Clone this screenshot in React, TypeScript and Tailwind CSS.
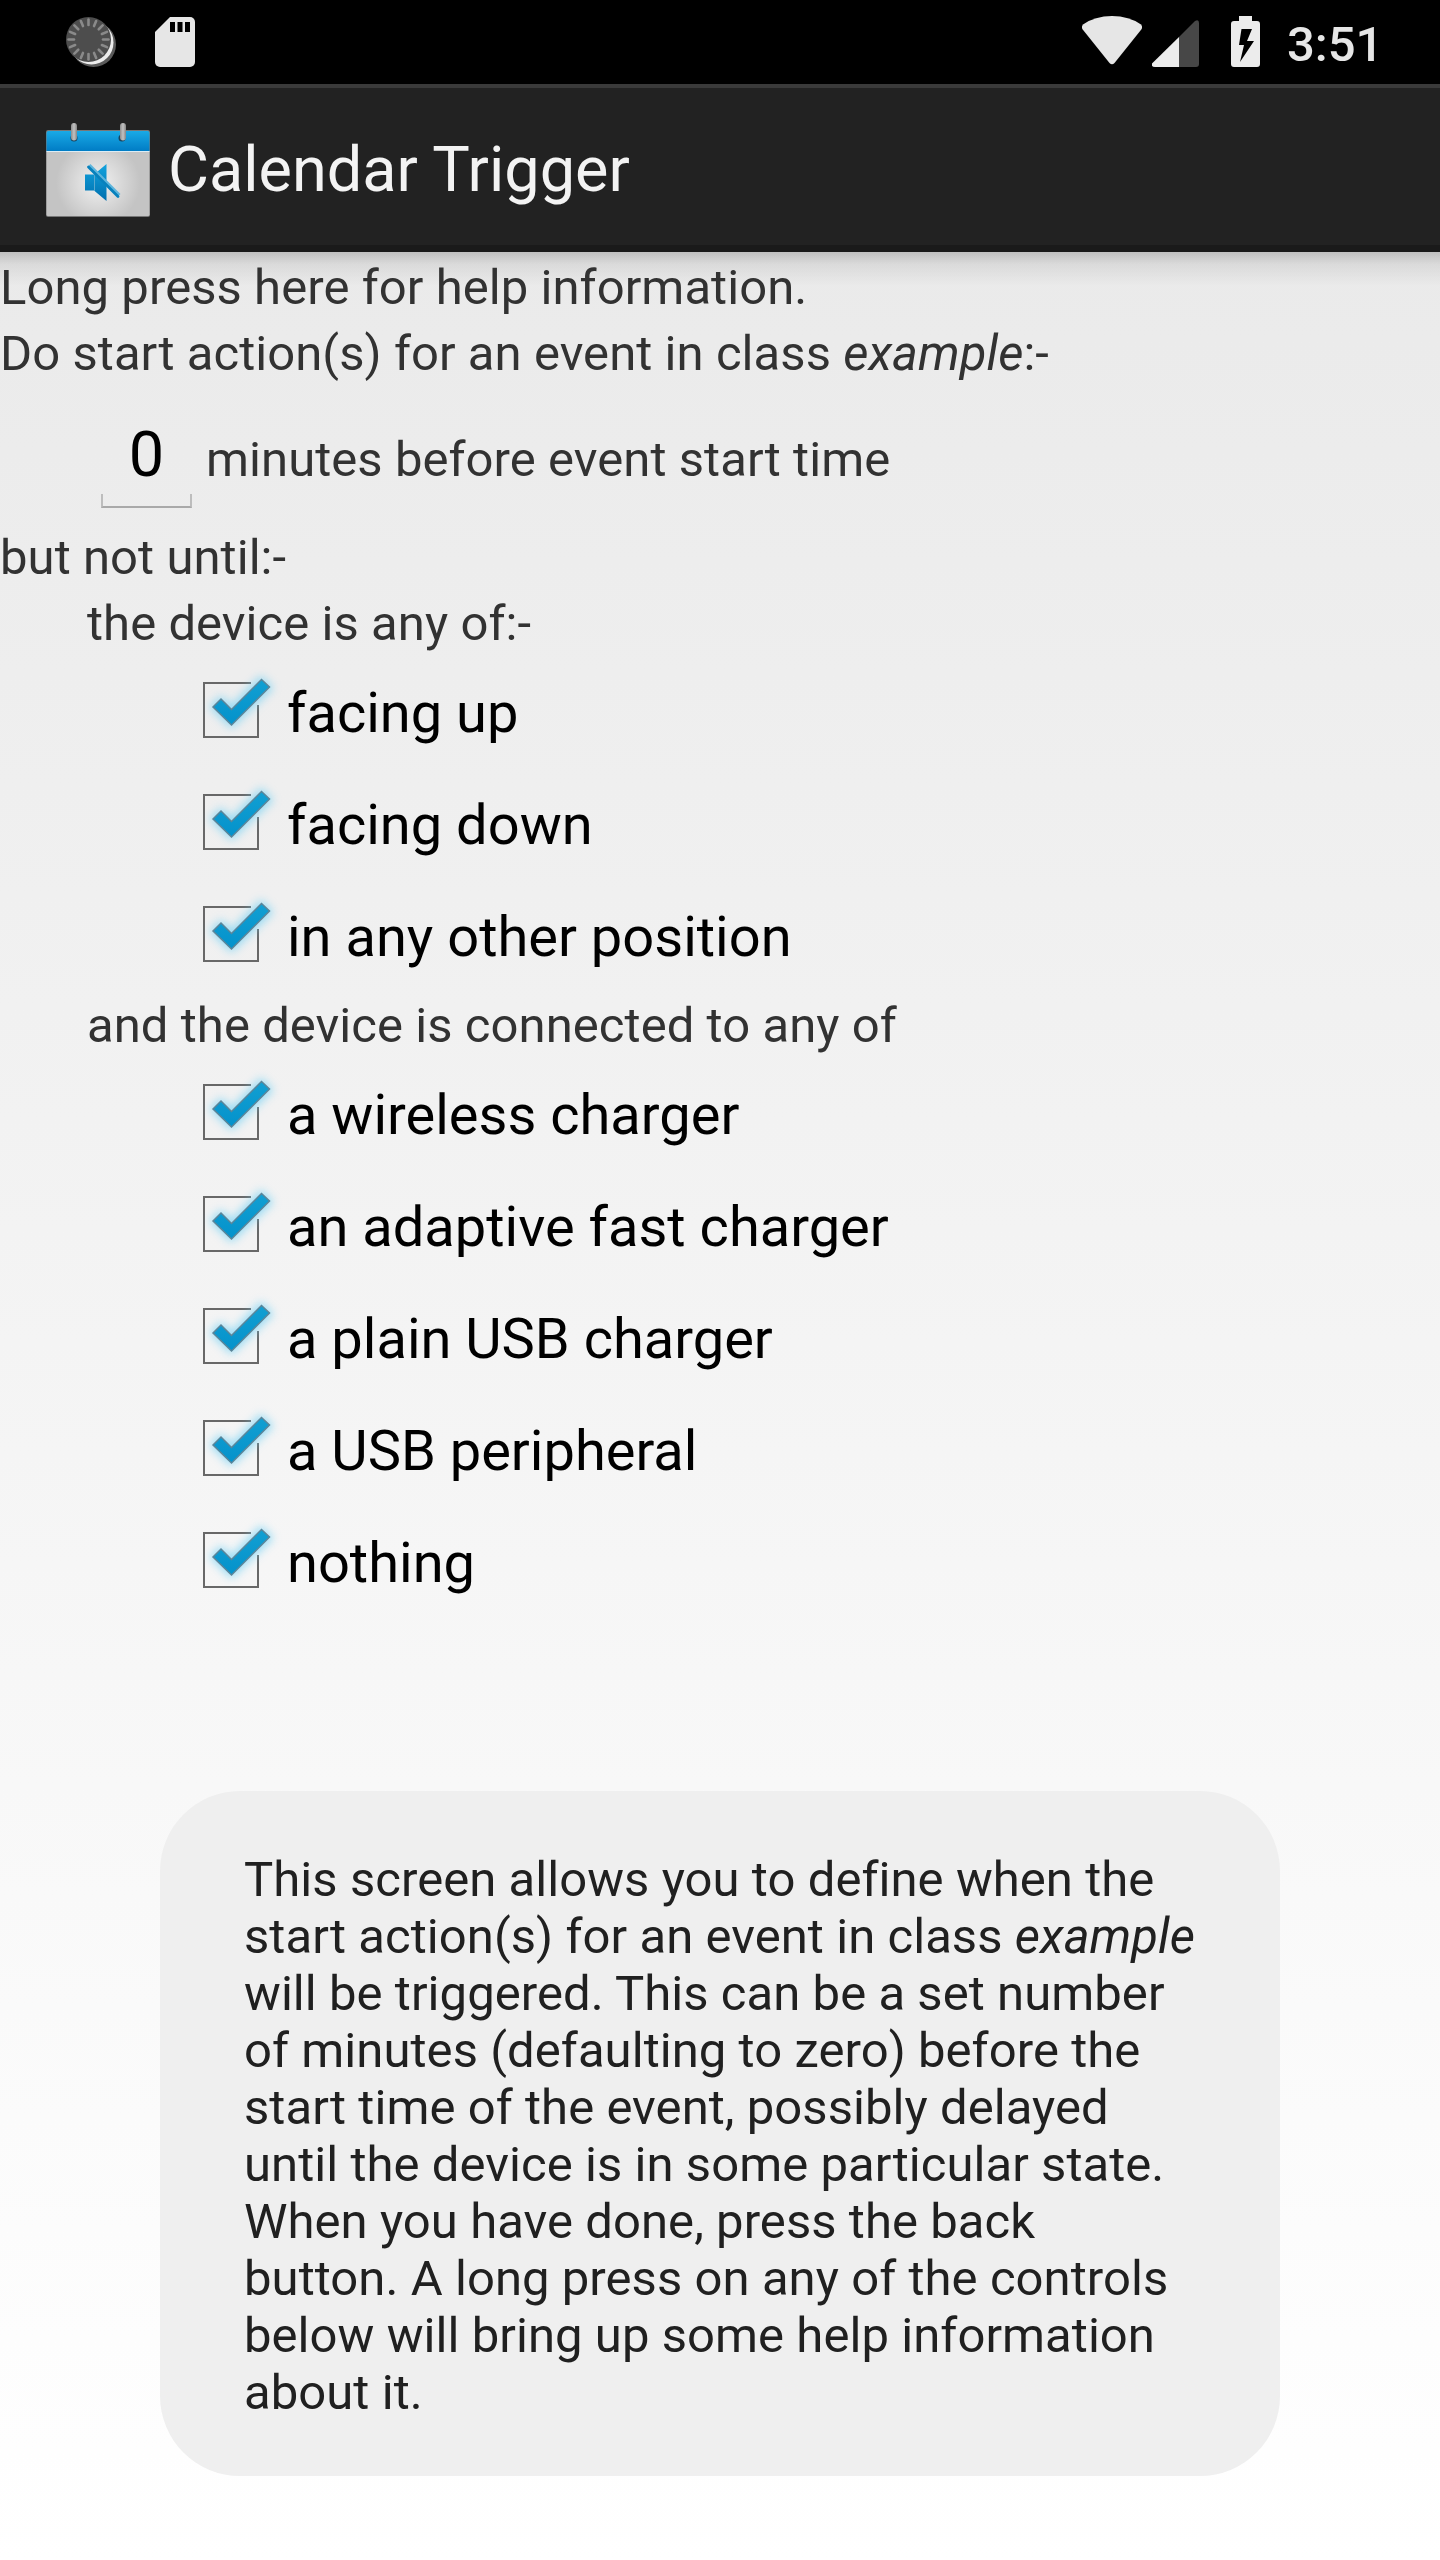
import React from "react";

const deviceStates = ["facing up", "facing down", "in any other position"];
const connections = [
  "a wireless charger",
  "an adaptive fast charger",
  "a plain USB charger",
  "a USB peripheral",
  "nothing",
];

function SyncIcon() {
  const rays = Array.from({ length: 16 }, (_, i) => i * 22.5);
  return (
    <svg width="50" height="50" viewBox="0 0 50 50">
      <circle cx="27.5" cy="27.5" r="22.5" fill="#5a5a5a" />
      <circle cx="25.5" cy="25.5" r="22" fill="#ececec" />
      <circle cx="22.5" cy="22.5" r="22.5" fill="#4d4d4d" />
      {rays.map((a) => (
        <path key={a} d="M22.5 2.5V8" transform={`rotate(${a} 22.5 22.5)`} stroke="#8a8a8a" strokeWidth="2.6" strokeLinecap="round" />
      ))}
    </svg>
  );
}

function SdCardIcon() {
  return (
    <svg width="40" height="50" viewBox="0 0 40 50">
      <path d="M15 0H35a5 5 0 0 1 5 5V45a5 5 0 0 1-5 5H5a5 5 0 0 1-5-5V15Z" fill="#e6e6e6" />
      <path d="M15 5h5v10h-5zM22.500 5h5v10h-5zM30 5h5v10h-5z" fill="#000" />
    </svg>
  );
}

function WifiIcon() {
  return (
    <svg width="60" height="49" viewBox="0 0 60 49">
      <path d="M1 8.500Q13 0 30 0T59 8.500Q61 11 59.300 13.500L32.500 47Q30 49.500 27.500 47L.7 13.500Q-1 11 1 8.500Z" fill="#e6e6e6" />
    </svg>
  );
}

function SignalIcon() {
  return (
    <svg width="47" height="47" viewBox="0 0 47 47">
      <path d="M27 17L43 1Q47-1 47 3V44Q47 47 44 47H27Z" fill="#474747" />
      <path d="M27 17V47H3Q-1 47 0 43.500Z" fill="#ececec" />
    </svg>
  );
}

function BatteryIcon() {
  return (
    <svg width="29" height="51" viewBox="0 0 29 51">
      <path d="M8 0H21V5H26Q29 5 29 8V48Q29 51 26 51H3Q0 51 0 48V8Q0 5 3 5H8Z" fill="#ececec" />
      <path d="M10.500 13H21L16 25H23L9 46L13 29H8Z" fill="#000" />
    </svg>
  );
}

function AppIcon() {
  return (
    <svg width="106" height="96" viewBox="0 0 106 96">
      <defs>
        <linearGradient id="band" x1="0" y1="0" x2="0" y2="1">
          <stop offset="0" stopColor="#19aae6" />
          <stop offset="1" stopColor="#007bc4" />
        </linearGradient>
        <radialGradient id="sheet" gradientUnits="userSpaceOnUse" cx="53" cy="61" r="42">
          <stop offset="0" stopColor="#f2f2f2" />
          <stop offset="1" stopColor="#c4c4c4" />
        </radialGradient>
        <linearGradient id="horn" x1="0" y1="0" x2="0" y2="1">
          <stop offset="0" stopColor="#12a3de" />
          <stop offset="1" stopColor="#006fae" />
        </linearGradient>
        <linearGradient id="ring" x1="0" y1="0" x2="1" y2="0">
          <stop offset="0" stopColor="#8d8d8d" />
          <stop offset=".5" stopColor="#c2c2c2" />
          <stop offset="1" stopColor="#858585" />
        </linearGradient>
      </defs>
      <rect x="1" y="8" width="104" height="87" rx="2" fill="#777" />
      <rect x="1.500" y="28" width="103" height="66" rx="1.500" fill="url(#sheet)" />
      <path d="M1.500 11Q1.500 9 3.500 9H102.500Q104.500 9 104.500 11V29.500H1.500Z" fill="url(#band)" />
      <path d="M1.500 29.500h103" stroke="#dcecf4" />
      <circle cx="29" cy="16" r="3.500" fill="#17445f" />
      <circle cx="77" cy="16" r="3.500" fill="#17445f" />
      <rect x="26" y="1" width="6" height="17.500" rx="3" fill="url(#ring)" />
      <rect x="75" y="1" width="6" height="17.500" rx="3" fill="url(#ring)" />
      <path d="M40 52.500H49L61.500 42V79L49 68.500H40Z" fill="url(#horn)" />
      <path d="M49.500 52V69" stroke="#58a8cf" />
      <path d="M44 43.500L74 73.500" stroke="#5eb5dc" strokeWidth="4" />
      <path d="M43.500 45L73 74.500" stroke="#0781bd" strokeWidth="2.800" strokeLinecap="round" />
    </svg>
  );
}

function CheckMark() {
  return (
    <svg className="shrink-0 overflow-visible" width="84" height="112" viewBox="0 0 84 112">
      <defs>
        <filter id="glow" x="-50%" y="-50%" width="200%" height="200%">
          <feGaussianBlur stdDeviation="5" />
        </filter>
        <linearGradient id="tick" x1="0" y1="0" x2="0" y2="1">
          <stop offset="0" stopColor="#129fd2" />
          <stop offset="1" stopColor="#0492cb" />
        </linearGradient>
      </defs>
      <path d="M48 29H1V83H55V51" fill="none" stroke="#686868" strokeWidth="2" />
      <path d="M10 53L18 45L28.500 55L58 25L67 34L28.500 71Z" fill="#6fd0f5" stroke="#6fd0f5" strokeWidth="5" filter="url(#glow)" opacity=".7" />
      <path d="M10 53L18 45L28.500 55.500L58.500 25.500L66.500 33L28.500 71Z" fill="url(#tick)" stroke="#5b8599" strokeWidth="1.500" />
    </svg>
  );
}

function CheckRow({ label }: { label: string }) {
  return (
    <label className="flex h-28 items-center pl-[203px] text-[56px] leading-[66px] text-black">
      <CheckMark />
      <span className="pt-[6px] whitespace-nowrap">{label}</span>
    </label>
  );
}

export default function App() {
  return (
    <div className="relative flex h-[2560px] w-[1440px] flex-col overflow-hidden bg-linear-to-b from-[#e8e8e8] to-white font-['Roboto',sans-serif] text-[49px] text-[#323232]">
      <header className="shrink-0">
        <div className="flex h-[84px] items-center bg-black">
          <div className="flex flex-1 items-center gap-[39px] pl-[66px]">
            <SyncIcon />
            <SdCardIcon />
          </div>
          <div className="flex h-[67px] items-end self-start">
            <div className="mb-[2px]"><WifiIcon /></div>
            <div className="ml-[10px]"><SignalIcon /></div>
            <div className="ml-8"><BatteryIcon /></div>
          </div>
          <span className="mr-[58px] ml-[27px] w-[95px] pt-[4px] text-[49px] leading-[57px] font-medium whitespace-nowrap text-[#e6e6e6]">3:51</span>
        </div>
        <div className="flex h-[168px] items-center border-t-4 border-b-[7px] border-t-[#3a3a3a] border-b-[#1a1a1a] bg-[#222] pt-[7px] pl-[45px]">
          <AppIcon />
          <h1 className="ml-[17px] text-[63px] leading-[74px] text-[#f3f3f3]">Calendar Trigger</h1>
        </div>
      </header>
      <main className="flex grow flex-col bg-[linear-gradient(to_bottom,rgba(0,0,0,.18),rgba(0,0,0,.07)_12px,transparent_34px)]">
        <p className="h-[66px] pt-[7px] leading-[58px] tracking-[0.06px]">Long press here for help information.</p>
        <p className="h-[66px] pt-[7px] leading-[58px] tracking-[0.06px]">
          Do start action(s) for an event in class <i>example</i>:-
        </p>
        <div className="flex h-[138px] items-baseline pl-[101px] pt-[34px]">
          <div className="flex w-[91px] flex-col">
            <span className="text-center text-[63px] leading-[74px] text-black">0</span>
            <span className="mt-[2px] h-[14px] border-2 border-t-0 border-[#bdbdbd] border-b-[#a9a9a9]" />
          </div>
          <span className="ml-[14px] leading-[58px] tracking-[0.06px]">minutes before event start time</span>
        </div>
        <p className="h-[66px] pt-[7px] leading-[58px] tracking-[0.06px]">but not until:-</p>
        <p className="h-[66px] pt-[7px] pl-[87px] leading-[58px] tracking-[0.06px]">the device is any of:-</p>
        {deviceStates.map((s) => <CheckRow key={s} label={s} />)}
        <p className="h-[66px] pt-[7px] pl-[87px] leading-[58px] tracking-[0.06px]">and the device is connected to any of</p>
        {connections.map((s) => <CheckRow key={s} label={s} />)}
      </main>
      <aside className="absolute top-[1791px] left-40 h-[685px] w-[1120px] rounded-[80px] bg-[#efefef] px-[84px] pt-[60px] leading-[57px] tracking-[0.06px] whitespace-nowrap text-[#202020]">
        This screen allows you to define when the<br />
        start action(s) for an event in class <i>example</i><br />
        will be triggered. This can be a set number<br />
        of minutes (defaulting to zero) before the<br />
        start time of the event, possibly delayed<br />
        until the device is in some particular state.<br />
        When you have done, press the back<br />
        button. A long press on any of the controls<br />
        below will bring up some help information<br />
        about it.
      </aside>
    </div>
  );
}
